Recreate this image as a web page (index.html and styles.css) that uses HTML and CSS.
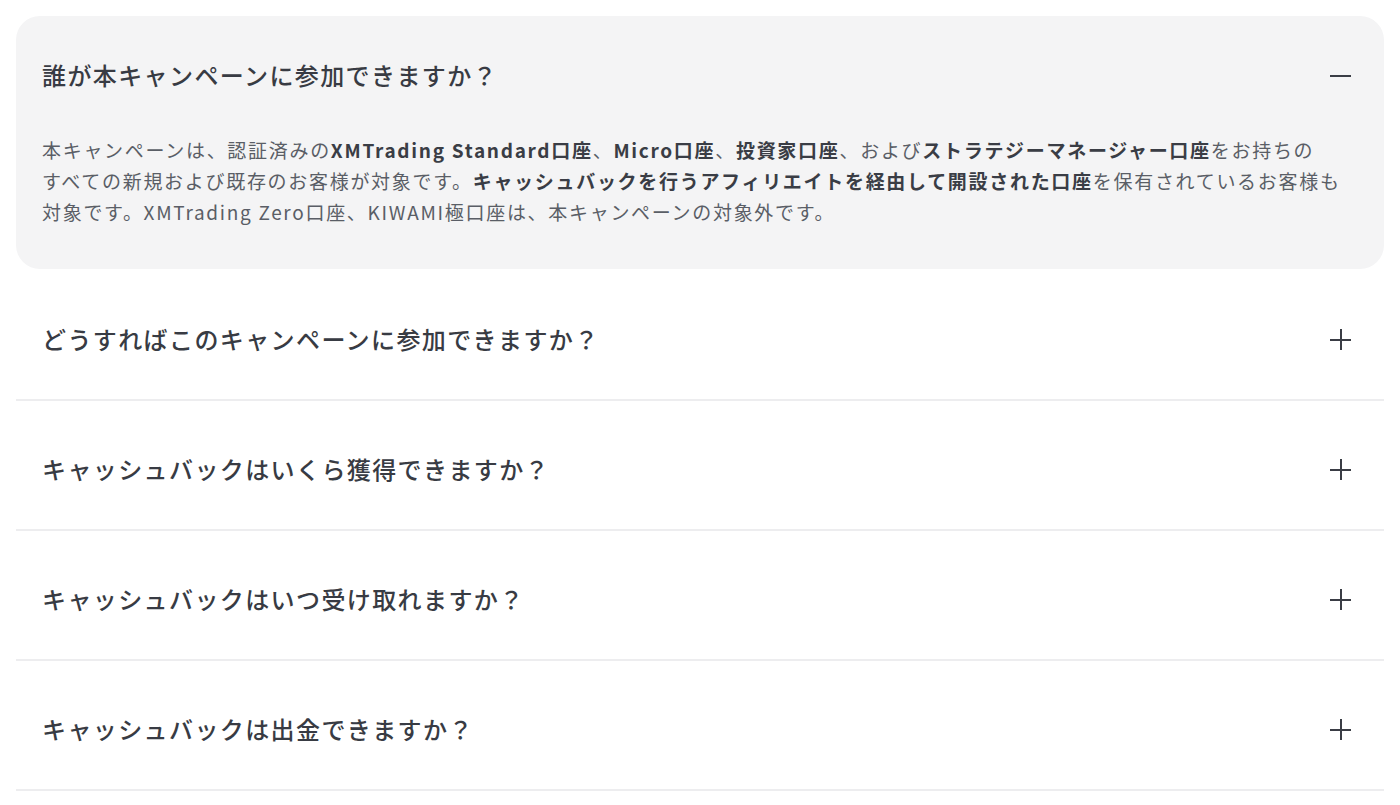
FILE: index.html
```html
<!DOCTYPE html>
<html lang="ja">
  <head>
    <meta charset="utf-8">
    <title>よくある質問</title>
    <link rel="stylesheet" href="styles.css">
  </head>
  <body>
    <div class="faq">
      <div class="faq-item open">
        <button class="faq-q">
          <span>誰が本キャンペーンに参加できますか？</span>
          <span class="faq-icon minus"></span>
        </button>
        <div class="faq-a">
          本キャンペーンは、認証済みの<b>XMTrading Standard口座</b>、<b>Micro口座</b>、<b>投資家口座</b>、および<b>ストラテジーマネージャー口座</b>をお持ちの<br>すべての新規および既存のお客様が対象です。<b>キャッシュバックを行うアフィリエイトを経由して開設された口座</b>を保有されているお客様も対象です。XMTrading Zero口座、KIWAMI極口座は、本キャンペーンの対象外です。
        </div>
      </div>
      <div class="faq-item">
        <button class="faq-q">
          <span>どうすればこのキャンペーンに参加できますか？</span>
          <span class="faq-icon plus"></span>
        </button>
      </div>
      <div class="faq-item">
        <button class="faq-q">
          <span>キャッシュバックはいくら獲得できますか？</span>
          <span class="faq-icon plus"></span>
        </button>
      </div>
      <div class="faq-item">
        <button class="faq-q">
          <span>キャッシュバックはいつ受け取れますか？</span>
          <span class="faq-icon plus"></span>
        </button>
      </div>
      <div class="faq-item">
        <button class="faq-q">
          <span>キャッシュバックは出金できますか？</span>
          <span class="faq-icon plus"></span>
        </button>
      </div>
    </div>
  </body>
</html>
```

FILE: styles.css
```css
body {
  margin: 0;
  background: #fff;
  font-family: "Noto Sans CJK JP", "Noto Sans", sans-serif;
  color: #3a3d45;
}

.faq {
  padding: 16px 16px 0;
}

.faq-item {
  border-bottom: 2px solid #ededef;
}

.faq-item.open {
  background: #f4f4f5;
  border-radius: 24px;
  border-bottom: none;
  padding-bottom: 42px;
  margin-bottom: 2px;
}

.faq-q {
  display: flex;
  align-items: center;
  justify-content: space-between;
  width: 100%;
  padding: 52px 33px 44px 26px;
  border: 0;
  background: none;
  font-family: inherit;
  font-size: 24px;
  line-height: 32px;
  letter-spacing: 1.4px;
  font-weight: 500;
  color: #383b43;
  text-align: left;
  cursor: pointer;
}

.open .faq-q {
  padding-top: 43px;
  padding-bottom: 43px;
}

.faq-icon {
  position: relative;
  width: 21px;
  height: 21px;

  &::before,
  &::after {
    content: "";
    position: absolute;
    background: #3a3d45;
  }

  &::before {
    left: 0;
    right: 0;
    top: 10px;
    height: 2px;
  }
}

.faq-icon.plus::after {
  top: 0;
  bottom: 0;
  left: 10px;
  width: 2px;
}

.faq-a {
  padding: 0 34px 0 26px;
  font-size: 19px;
  line-height: 31px;
  letter-spacing: 1.7px;
  color: #5a5e66;

  b {
    font-weight: 700;
    color: #3a3d45;
  }
}
```
